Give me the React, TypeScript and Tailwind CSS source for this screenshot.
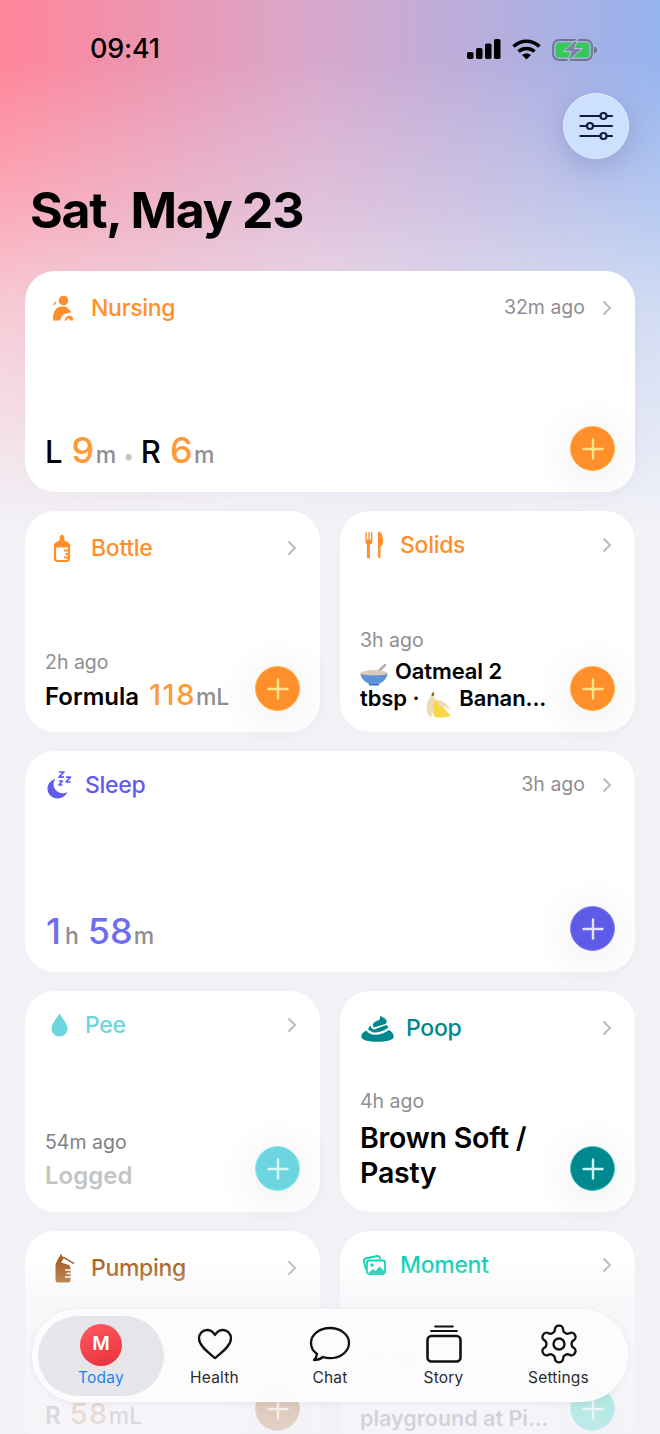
import React from "react";

const Chevron = () => (
  <svg width="10" height="16" viewBox="0 0 10 16" fill="none" stroke="#bcbcc0" strokeWidth="2" strokeLinecap="round" strokeLinejoin="round">
    <path d="M2 2l6 6-6 6" />
  </svg>
);

const Plus = ({ bg, color, ring }: { bg: string; color: string; ring: string }) => (
  <div className={`w-[45px] h-[45px] shrink-0 rounded-full flex items-center justify-center border shadow-[0_6px_34px_14px_rgba(0,0,0,0.04)] ${bg} ${ring}`}>
    <svg width="24" height="24" viewBox="0 0 24 24" fill="none" stroke={color} strokeWidth="2.4" strokeLinecap="round">
      <path d="M12 2.5v19M2.5 12h19" />
    </svg>
  </div>
);

const NursingIcon = () => (
  <svg width="22" height="26" viewBox="0 0 22 26" fill="#ff8f2b">
    <circle cx="11.5" cy="5.5" r="4.8" />
    <path d="M3.2 6.5 L1 9.6l1.2.8 2.2-3.1z" />
    <path d="M1 25.5c-.4-5 .8-9.400 3.500-12 2.500-2.300 8-2.500 11-.6l4 4.100-3 1c-3.700.2-6.800 2.200-8.500 7.500z" />
    <path d="M12.500 25.500c.7-3 3-4.900 5.200-4.700 2 .2 3.300 1.500 3.300 3.400v1.300h-3.300v-1c0-.8-.4-1.100-1-1.100-.8 0-1.500.7-1.900 2.100z" />
  </svg>
);

const BottleIcon = () => (
  <svg width="18" height="28" viewBox="0 0 18 28" fill="none">
    <path d="M6.500 4.500c0-2 1-3.800 2.500-3.800s2.500 1.800 2.500 3.800v2c2.500 1 5.500 2.500 6 5.500H.5c.5-3 3.500-4.500 6-5.500z" fill="#ff8f2b" />
    <path d="M2 12.500h14v12a2.500 2.500 0 0 1-2.500 2.500h-9A2.500 2.500 0 0 1 2 24.500z" stroke="#ff8f2b" strokeWidth="2.200" />
    <path d="M11 16.500h5M12.500 20h3.500M11 23.500h5" stroke="#ff8f2b" strokeWidth="1.800" />
  </svg>
);

const SolidsIcon = () => (
  <svg width="19" height="28" viewBox="0 0 19 28" fill="#ff8f2b">
    <path d="M.5 1.500c0-.8 1.300-.8 1.300 0v7h1.500v-7c0-.8 1.300-.8 1.300 0v7h1.500v-7c0-.8 1.300-.8 1.300 0V10c0 2-1 3.200-2.500 3.800V26a1.500 1.500 0 0 1-3 0V13.800C1.500 13.200.5 12 .5 10z" />
    <path d="M13 2c0-1.500 1-1.800 1.800-1.300C17 2 18 6.500 18 11c0 2-.8 4-2.500 4.500V26a1.300 1.300 0 0 1-2.500 0z" />
  </svg>
);

const SleepIcon = () => (
  <svg width="25" height="28" viewBox="0 0 25 28" fill="none">
    <path d="M9.500 7.500C4 8.700.5 13 .5 17.800c0 5.500 4.500 9.700 10 9.700 4.500 0 8-2.500 10-6.500-1.500 1-3 1.300-4.500 1.300-6 0-9.500-4.500-9.500-9 0-2.500 1-4.500 2.500-5.800z" fill="#5f5cf0" />
    <path d="M12 1h5l-5 5.200h5M19 6.200h4.500L19 11h4.500M12 10h3.500L12 14h3.500" stroke="#5f5cf0" strokeWidth="1.700" strokeLinejoin="round" />
  </svg>
);

const PeeIcon = () => (
  <svg width="17" height="24" viewBox="0 0 17 24" fill="#6cd5df">
    <path d="M8.500 .5C6.500 4.500.5 10.500.5 15.500c0 4.600 3.600 8 8 8s8-3.400 8-8C16.500 10.500 10.500 4.500 8.500.5z" />
  </svg>
);

const PoopIcon = () => (
  <svg width="33" height="27" viewBox="0 0 33 27" fill="#00888f">
    <path d="M19 .5c2 1.800 5.500 2.500 6.500 5 .5 1.500 0 2.500-1 3.500L13 12.500c-1-1 -1.500-2-1-3.500 1-2 3-3 5-3.500 2-.8 2.500-2.500 2-5z" />
    <path d="M9.500 10.500 c-1.500 1.300-2.500 2.600-2 4.500L12 17.500c5 .5 11-1.500 15-4.500.5-1-.3-2-1.500-3L13 14.500c-1.500 0-3-2-3.500-4z" />
    <path d="M5.500 15.500C2 17 .3 19.200.3 21.500.3 25 7 26.800 16.500 26.800 26 26.800 32.700 25 32.700 21.500c0-2.800-2-5-4.700-6.500-5 3.500-11 5.500-16.500 4.500-2.500-.5-5-2-6-4z" />
  </svg>
);

const PumpingIcon = () => (
  <svg width="22" height="30" viewBox="0 0 22 30" fill="#a85f20">
    <path d="M3 10 L8 .8l2.500 4.700 L8 9.500 L16 12c1 .8 1.500 2 1.500 3.500V27a2.500 2.500 0 0 1-2.500 2.500H5A2.500 2.500 0 0 1 2.500 27V14c0-1.500 .2-3 .5-4z" />
    <path d="M10.500 3.500l11 6.500-.8 1.300-11-6.500z" />
    <path d="M12 17h5.500M13.500 20.500h4M12 24h5.500" stroke="#fff" strokeWidth="1.400" />
  </svg>
);

const MomentIcon = () => (
  <svg width="24" height="20" viewBox="0 0 24 20" fill="none">
    <path d="M4 15 2 6a2 2 0 0 1 1.500-2.500L15.500 1a2 2 0 0 1 2.300 1.700L18 4" stroke="#0fcfb5" strokeWidth="1.800" />
    <rect x="5" y="5.500" width="18" height="13.500" rx="2.200" stroke="#0fcfb5" strokeWidth="1.800" />
    <circle cx="10" cy="10" r="1.700" fill="#0fcfb5" />
    <path d="M6 18.500l5-4.500 2.500 2 4-4.500 5 5v2z" fill="#0fcfb5" />
  </svg>
);

const Bowl = () => (
  <svg width="28" height="24" viewBox="0 0 28 24" className="inline-block align-[-1px] mr-[7px] my-[-6px]">
    <path d="M15 11 25 1.500l1.500 1.500L19 11z" fill="#a9a9ad" />
    <ellipse cx="14" cy="11.500" rx="13.500" ry="3.500" fill="#d9cdb8" />
    <path d="M.5 11.500C3 14 25 14 27.500 11.500 27 17.500 21.500 22.500 14 22.500S1 17.500.5 11.500z" fill="#5f93d8" />
    <path d="M9 22h10v1.500H9z" fill="#3f6eb0" />
  </svg>
);

const Banana = () => (
  <svg width="26" height="26" viewBox="0 0 26 26" className="inline-block align-[-4px] mx-[7px] my-[-8px]">
    <path d="M7 0.500 5 4C2 8 .5 12 .5 16c0 4 1.500 7.500 4 9.500 1.500-2 2-5 2.500-8 .5-3 1-7 2-10z" fill="#ecdcb8" />
    <path d="M9 7c-2 4-3 9-2 15 .8 2.500 2.500 3.500 5 3.500 4 .2 8-.5 13-1-4-5.500-9-11-13-15z" fill="#f9d648" />
    <path d="M11 8c5-.5 10 3 14 11-4-3.500-8-5-12-5z" fill="#ecdcb8" />
    <path d="M6 .5h2.500L7.800 4H5.500z" fill="#8a6a36" />
  </svg>
);

const Signal = () => (
  <svg width="34" height="20" viewBox="0 0 34 20" fill="#000">
    <rect x="0" y="13" width="6.500" height="7" rx="1.800" />
    <rect x="9" y="9" width="6.500" height="11" rx="1.800" />
    <rect x="18" y="4.500" width="6.500" height="15.500" rx="1.800" />
    <rect x="27" y="0" width="6.500" height="20" rx="1.800" />
  </svg>
);

const Wifi = () => (
  <svg width="29" height="21" viewBox="0 0 29 21" fill="none" stroke="#000" strokeWidth="3.600">
    <path d="M1.500 7.500c7.500-7 18.500-7 26 0" />
    <path d="M6.500 12.500c4.500-4 11.500-4 16 0" />
    <path d="M14.500 20.500l-4.500-4.500c2.500-2 6.500-2 9 0z" fill="#000" stroke="none" />
  </svg>
);

const Battery = () => (
  <svg width="46" height="22" viewBox="0 0 46 22" fill="none">
    <rect x="1" y="1" width="39" height="20" rx="6" stroke="#6f7590" strokeWidth="1.800" />
    <rect x="3.500" y="3.500" width="34" height="15" rx="3.500" fill="#38c759" />
    <path d="M42 7.500c2 .3 3 1.800 3 3.500s-1 3.200-3 3.500z" fill="#6f7590" />
    <path d="M26 -1 11.500 12.500H19L15.500 23 30.500 9.500H22.500z" fill="#7d84a5" stroke="#b3c3e3" strokeWidth="1" />
  </svg>
);

const Sliders = () => (
  <svg width="34" height="28" viewBox="0 0 34 28" fill="none" stroke="#12203f" strokeWidth="2.200" strokeLinecap="round">
    <path d="M1.500 4h20M28 4h5M1.500 14h6.500M14.500 14H33M1.500 24h20M28 24h5" />
    <circle cx="24.500" cy="4" r="3" />
    <circle cx="11" cy="14" r="3" />
    <circle cx="24.500" cy="24" r="3" />
  </svg>
);

type CardProps = {
  icon: React.ReactNode;
  iconBox: string;
  title: string;
  titleColor: string;
  headerTop: string;
  ago?: string;
  children?: React.ReactNode;
  plus: React.ReactNode;
};

const Card = ({ icon, iconBox, title, titleColor, headerTop, ago, children, plus }: CardProps) => (
  <div className="h-[221px] rounded-[30px] bg-white flex flex-col pl-[20px] pr-[20px] pb-[21px] shadow-[0_2px_10px_rgba(120,120,150,0.04)]">
    <div className={`flex items-center h-[34px] ${headerTop}`}>
      <div className={`flex items-center ${iconBox}`}>{icon}</div>
      <div className={`text-[23px] leading-[34px] font-medium tracking-[-0.3px] ${titleColor}`}>{title}</div>
      <div className="ml-auto flex items-center pr-[3px]">
        {ago && <span className="text-[19.500px] text-[#8e8e93] mr-[17px]">{ago}</span>}
        <Chevron />
      </div>
    </div>
    <div className="flex-1" />
    <div className="flex items-end justify-between">
      <div className="min-w-0">{children}</div>
      {plus}
    </div>
  </div>
);

const orange = <Plus bg="bg-[#ff8f2b]" ring="border-[#ffb347]" color="#ffe58a" />;
const purple = <Plus bg="bg-[#5e5be8]" ring="border-[#8684f2]" color="#e4e3ff" />;
const cyan = <Plus bg="bg-[#6cd5df]" ring="border-[#8ceaf0]" color="#d5fbfd" />;
const teal = <Plus bg="bg-[#00888f]" ring="border-[#3fc5c8]" color="#c8fbf8" />;
const brown = <Plus bg="bg-[#a85f20]" ring="border-[#c88a4a]" color="#f9e6c8" />;
const mint = <Plus bg="bg-[#0fcfb5]" ring="border-[#55e6d2]" color="#d5fff8" />;

const Ago = ({ children }: { children: React.ReactNode }) => (
  <div className="text-[19.500px] leading-[26px] text-[#8e8e93]">{children}</div>
);

const Tab = ({ icon, label, className }: { icon: React.ReactNode; label: string; className: string }) => (
  <div className={`flex flex-col items-center ${className}`}>
    <div className="h-[40px] flex items-center justify-center">{icon}</div>
    <div className="text-[15.500px] leading-[20px] mt-[4px] text-[#2c2c2e] tracking-[0.2px]">{label}</div>
  </div>
);

export default function App() {
  return (
    <div className="relative w-[660px] h-[1434px] overflow-hidden [font-family:Inter,'Liberation_Sans',sans-serif] bg-[#f2f2f7] text-black bg-[linear-gradient(to_bottom,rgba(242,242,247,0)_60px,rgba(242,242,247,0.35)_210px,rgba(242,242,247,0.62)_300px,rgba(242,242,247,1)_530px),linear-gradient(to_right,#ff8599_0%,#d8a8cc_48%,#96b4ee_100%)]">
      <div className="h-[93px] flex justify-between pt-[33px] pl-[90px] pr-[62px]">
        <div className="text-[27px] leading-[32px] font-medium tracking-[-0.2px]">09:41</div>
        <div className="flex items-start gap-[11px] pt-[6px]">
          <Signal />
          <Wifi />
          <Battery />
        </div>
      </div>

      <div className="flex justify-end pr-[31px]">
        <div className="w-[66px] h-[66px] rounded-full bg-[#cde0fd] border border-[#e2eeff] flex items-center justify-center shadow-[0_8px_30px_rgba(70,90,150,0.28)]">
          <Sliders />
        </div>
      </div>

      <div className="pl-[30px] pt-[21px] pb-[31px] text-[50px] leading-[60px] font-bold tracking-[-1.300px]">Sat, May 23</div>

      <div className="flex flex-col gap-[19px] px-[25px]">
        <Card icon={<NursingIcon />} iconBox="w-[46px] pl-[7px]" title="Nursing" titleColor="text-[#ff8f2b]" headerTop="mt-[20px]" ago="32m ago" plus={orange}>
          <div className="flex items-baseline text-[31px] leading-[40px] font-medium mb-[-5px]">
            <span>L</span>
            <span className="ml-[9px] text-[36px] tracking-[0.5px] text-[#ff9a36]">9</span>
            <span className="text-[23px] text-[#8e8e93] ml-[1px]">m</span>
            <span className="text-[#c4c4c8] text-[20px] mx-[7px]">•</span>
            <span>R</span>
            <span className="ml-[9px] text-[36px] tracking-[0.5px] text-[#ff9a36]">6</span>
            <span className="text-[23px] text-[#8e8e93] ml-[1px]">m</span>
          </div>
        </Card>

        <div className="grid grid-cols-2 gap-x-[20px]">
          <Card icon={<BottleIcon />} iconBox="w-[46px] pl-[8px]" title="Bottle" titleColor="text-[#ff8f2b]" headerTop="mt-[20px]" plus={orange}>
            <Ago>2h ago</Ago>
            <div className="flex items-baseline text-[24px] leading-[34px] font-semibold mt-[3px] mb-[-3px] whitespace-nowrap">
              <span>Formula</span>
              <span className="ml-[10px] text-[29px] tracking-[1.500px] font-medium text-[#ff9a36]">118</span>
              <span className="text-[23px] font-medium text-[#8e8e93]">mL</span>
            </div>
          </Card>
          <Card icon={<SolidsIcon />} iconBox="w-[40px] pl-[5px]" title="Solids" titleColor="text-[#ff8f2b]" headerTop="mt-[17px]" plus={orange}>
            <Ago>3h ago</Ago>
            <div className="text-[22px] leading-[27px] font-semibold mt-[5px] mb-[-1px] whitespace-nowrap tracking-[-0.1px]">
              <div><Bowl />Oatmeal 2</div>
              <div>tbsp ·<Banana />Banan...</div>
            </div>
          </Card>
        </div>

        <Card icon={<SleepIcon />} iconBox="w-[40px] pl-[2px]" title="Sleep" titleColor="text-[#5f5cf0]" headerTop="mt-[17px]" ago="3h ago" plus={purple}>
          <div className="flex items-baseline text-[36px] leading-[40px] font-medium text-[#6f6df0] mb-[-5px] pl-[1px]">
            <span>1</span>
            <span className="text-[23px] text-[#8e8e93] ml-[4px] mr-[9px]">h</span>
            <span>58</span>
            <span className="text-[23px] text-[#8e8e93] ml-[1px]">m</span>
          </div>
        </Card>

        <div className="grid grid-cols-2 gap-x-[20px]">
          <Card icon={<PeeIcon />} iconBox="w-[40px] pl-[6px]" title="Pee" titleColor="text-[#6cd5df]" headerTop="mt-[17px]" plus={cyan}>
            <div className="text-[19.500px] leading-[26px] text-[#808085]">54m ago</div>
            <div className="text-[24px] leading-[34px] font-semibold text-[#c4c4c6] mt-[4px] mb-[-2px]">Logged</div>
          </Card>
          <Card icon={<PoopIcon />} iconBox="w-[46px] pl-[1px]" title="Poop" titleColor="text-[#00888f]" headerTop="mt-[20px]" plus={teal}>
            <Ago>4h ago</Ago>
            <div className="text-[28.500px] leading-[35px] font-semibold mt-[6px] mb-[1px] whitespace-nowrap tracking-[-0.2px]">
              Brown Soft /<br />Pasty
            </div>
          </Card>
        </div>

        <div className="grid grid-cols-2 gap-x-[20px]">
          <Card icon={<PumpingIcon />} iconBox="w-[46px] pl-[8px]" title="Pumping" titleColor="text-[#a85f20]" headerTop="mt-[20px]" plus={brown}>
            <div className="text-[24px] leading-[34px] font-semibold flex items-baseline mb-[-2px]">
              <span className="text-[#8e8e93]">R</span>
              <span className="ml-[9px] text-[29px] tracking-[1.500px] font-medium text-[#c89468]">58</span>
              <span className="text-[23px] font-medium text-[#8e8e93]">mL</span>
            </div>
          </Card>
          <Card icon={<MomentIcon />} iconBox="w-[40px] pl-[2px]" title="Moment" titleColor="text-[#0fcfb5]" headerTop="mt-[17px]" plus={mint}>
            <Ago>7h ago</Ago>
            <div className="text-[21.500px] leading-[28px] font-semibold text-[#6e6e73] mt-[33px] mb-[-1px] whitespace-nowrap">playground at Pi...</div>
          </Card>
        </div>
      </div>

      <div className="absolute left-0 right-0 bottom-0 h-[174px] bg-[linear-gradient(to_bottom,rgba(242,242,247,0)_0%,rgba(242,242,247,0.55)_25%,rgba(242,242,247,0.78)_100%)]" />

      <div className="absolute left-[32px] top-[1309px] w-[596px] h-[93px] rounded-full bg-[rgba(252,252,254,0.96)] shadow-[0_1px_6px_rgba(120,120,140,0.12)] border border-white flex items-center pl-[5px]">
        <div className="w-[126px] h-[80px] rounded-full bg-[#e6e6ea] flex flex-col items-center">
          <div className="w-[42px] h-[42px] mt-[8px] rounded-full bg-[linear-gradient(160deg,#ff5a5f,#e8303c)] flex items-center justify-center text-white text-[19px] font-semibold">M</div>
          <div className="text-[15.500px] leading-[20px] mt-[2px] text-[#1a84f5] tracking-[0.2px]">Today</div>
        </div>
        <Tab className="w-[101px]" label="Health" icon={
          <svg width="36" height="32" viewBox="0 0 36 32" fill="none" stroke="#111" strokeWidth="2.300" strokeLinejoin="round">
            <path d="M18 30C12 25 2 18 2 10.500 2 5.500 5.800 2 10 2c3.500 0 6.300 2 8 5 1.700-3 4.500-5 8-5 4.200 0 8 3.500 8 8.500C34 18 24 25 18 30z" />
          </svg>
        } />
        <Tab className="w-[130px]" label="Chat" icon={
          <svg width="42" height="36" viewBox="0 0 42 36" fill="none" stroke="#111" strokeWidth="2.300" strokeLinejoin="round">
            <path d="M21 2C10.500 2 2 8.500 2 17c0 4.500 2.500 8.500 6 11-.3 2.500-1.500 4.500-3 6 3.500 0 6.500-1 9-3 2 .8 4.500 1.200 7 1.200 10.500 0 19-6.700 19-15.200S31.500 2 21 2z" />
          </svg>
        } />
        <Tab className="w-[97px]" label="Story" icon={
          <svg width="36" height="38" viewBox="0 0 36 38" fill="none" stroke="#111" strokeLinecap="round">
            <path d="M9 1.500h18M5 6h26" strokeWidth="1.800" />
            <rect x="1.500" y="11" width="33" height="25.500" rx="4" strokeWidth="2.600" />
          </svg>
        } />
        <Tab className="w-[133px]" label="Settings" icon={
          <svg width="44" height="44" viewBox="0 0 24 24" fill="none" stroke="#111" strokeWidth="1.300" strokeLinecap="round" strokeLinejoin="round" className="my-[-2px]">
            <path d="M12.220 2h-.44a2 2 0 0 0-2 2v.18a2 2 0 0 1-1 1.730l-.43.25a2 2 0 0 1-2 0l-.15-.08a2 2 0 0 0-2.730.73l-.22.38a2 2 0 0 0 .73 2.730l.15.1a2 2 0 0 1 1 1.720v.51a2 2 0 0 1-1 1.740l-.15.09a2 2 0 0 0-.73 2.730l.22.38a2 2 0 0 0 2.730.73l.15-.08a2 2 0 0 1 2 0l.43.25a2 2 0 0 1 1 1.730V20a2 2 0 0 0 2 2h.44a2 2 0 0 0 2-2v-.18a2 2 0 0 1 1-1.730l.43-.25a2 2 0 0 1 2 0l.15.08a2 2 0 0 0 2.730-.73l.22-.39a2 2 0 0 0-.73-2.730l-.15-.08a2 2 0 0 1-1-1.740v-.5a2 2 0 0 1 1-1.740l.15-.09a2 2 0 0 0 .73-2.730l-.22-.38a2 2 0 0 0-2.730-.73l-.15.08a2 2 0 0 1-2 0l-.43-.25a2 2 0 0 1-1-1.730V4a2 2 0 0 0-2-2z" />
            <circle cx="12" cy="12" r="3" />
          </svg>
        } />
      </div>
    </div>
  );
}
